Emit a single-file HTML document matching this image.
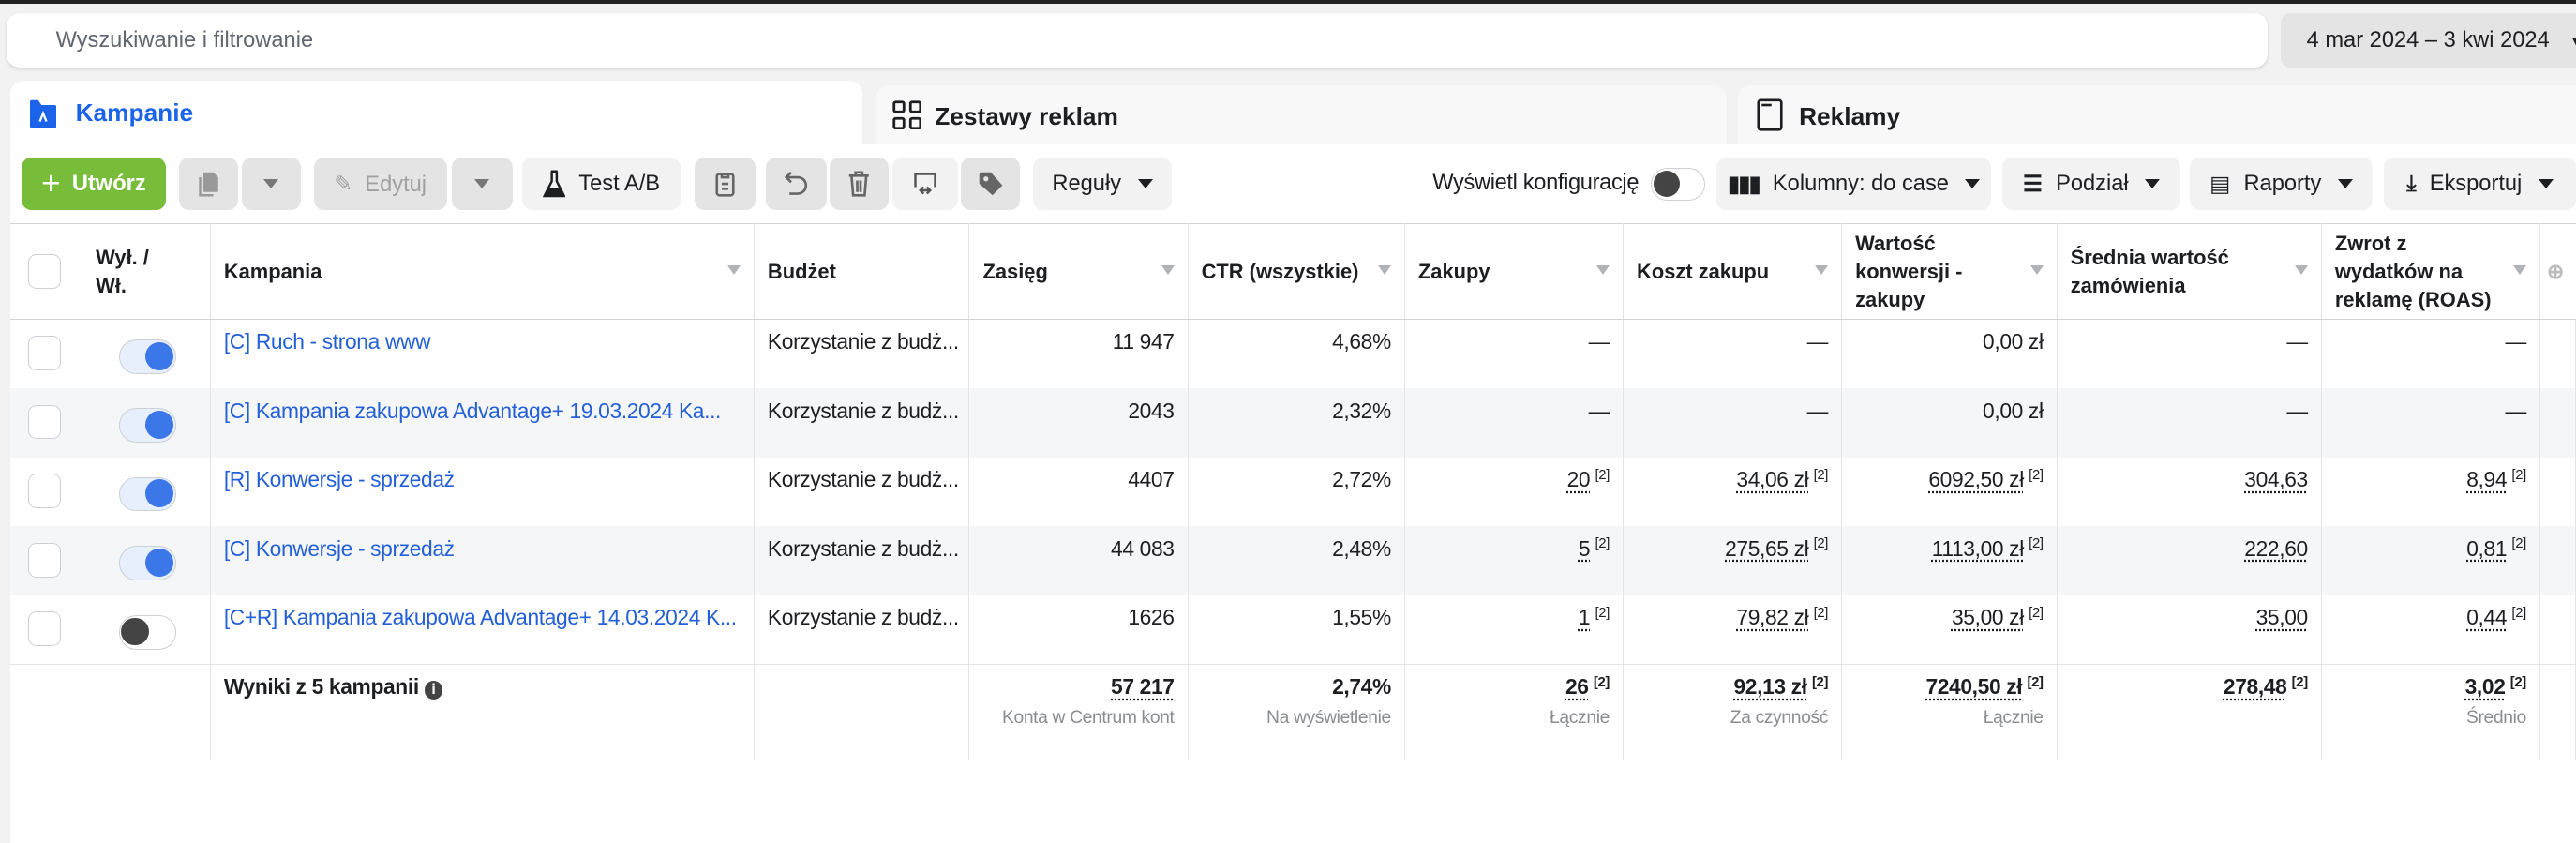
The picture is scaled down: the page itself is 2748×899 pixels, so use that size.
<!DOCTYPE html>
<html><head><meta charset="utf-8"><style>
html{zoom:1.7526}
*{box-sizing:border-box}
body{margin:0;width:1568px;height:513px;overflow:hidden;background:#f2f2f2;font-family:"Liberation Sans",sans-serif;color:#1c1e21;font-size:13px;position:relative}
.abs{position:absolute}
.topbar{left:0;top:0;width:1568px;height:2px;background:#222}
.search{left:4px;top:8px;width:1376px;height:33px;background:#fff;border-radius:8px;box-shadow:0 1px 2px rgba(0,0,0,.12)}
.search span{position:absolute;left:30px;top:9px;color:#606770;font-size:13.5px}
.date{left:1388px;top:8px;width:190px;height:33px;background:#e4e4e4;border-radius:6px;font-size:13.5px;padding:9px 0 0 16px;white-space:nowrap}
.tab{top:52px;height:40px;background:#f8f8f8;border-radius:8px 8px 0 0;font-weight:bold;font-size:15px}
.tab.act{top:49px;background:#fff;color:#1b63e8;height:44px}
.content{left:6px;top:88px;width:1562px;height:425px;background:#fff}
.btn{top:96px;height:32px;background:#e4e4e4;border-radius:6px;font-size:13.5px;display:flex;align-items:center;justify-content:center;color:#1c1e21;white-space:nowrap}
.btn.l{background:#f2f2f2}
.btn.dis{color:#a0a0a0}
.caret{display:inline-block;width:0;height:0;border-left:5px solid transparent;border-right:5px solid transparent;border-top:6px solid #1c1e21;margin-left:10px}
table{position:absolute;left:6px;top:136px;width:1562px;border-collapse:collapse;table-layout:fixed;font-size:12.5px}
td,th{border-right:1px solid #e4e4e4;vertical-align:top;padding:0 8px;overflow:hidden;white-space:nowrap}
th{height:58px;border-top:1px solid #d2d2d2;border-bottom:1px solid #d2d2d2;text-align:left;vertical-align:middle;font-weight:bold;line-height:17px;white-space:normal;position:relative;padding-right:22px}
th .s{position:absolute;right:8px;top:25px;border-left:4px solid transparent;border-right:4px solid transparent;border-top:6px solid #b0b3b8}
td{height:42px;padding-top:6px;font-size:13px;letter-spacing:-0.2px}
tr.g td{background:#f5f6f7}
td.r{text-align:right}
td.link{color:#2360d8}
.cb{width:20px;height:21px;border:1px solid #ccd0d5;border-radius:5px;background:#fff;margin:4px 0 0 3px}
.tg{width:35px;height:21px;border:1px solid #ccd0d5;border-radius:11px;background:#e8effc;position:relative;margin:6px 0 0 14px}
.tg i{position:absolute;right:1px;top:1px;width:17px;height:17px;border-radius:50%;background:#3b77e8}
.tg.off{background:#fff}.tg.off i{left:1px;right:auto;background:#444}
u{text-decoration:underline dotted;text-underline-offset:3px}
sup{font-size:8.5px;margin-left:3px}
tr.f td{height:58px;padding-top:6px;font-weight:bold}
tr.f small{display:block;font-weight:normal;color:#8a8d91;font-size:11px;margin-top:5px}
</style></head><body>
<div class="abs topbar"></div>
<div class="abs search"><span>Wyszukiwanie i filtrowanie</span></div>
<div class="abs date">4 mar 2024 – 3 kwi 2024 <span style="font-size:10px;margin-left:8px">▼</span></div>
<div class="abs tab" style="left:533px;width:518px;"><svg style="position:absolute;left:10px;top:9px" width="18" height="18" viewBox="0 0 18 18" fill="none" stroke="#1c1e21" stroke-width="1.6"><rect x="1" y="1" width="6" height="6" rx="1"/><rect x="11" y="1" width="6" height="6" rx="1"/><rect x="1" y="11" width="6" height="6" rx="1"/><rect x="11" y="11" width="6" height="6" rx="1"/></svg><span style="position:absolute;left:36px;top:10px">Zestawy reklam</span></div>
<div class="abs tab" style="left:1058px;width:520px;"><svg style="position:absolute;left:11px;top:8px" width="16" height="20" viewBox="0 0 16 20" fill="none" stroke="#1c1e21" stroke-width="1.5"><rect x="1" y="1" width="14" height="18" rx="1.5"/><path d="M3 4h6"/></svg><span style="position:absolute;left:37px;top:10px">Reklamy</span></div>
<div class="abs content"></div>
<div class="abs tab act" style="left:6px;width:519px;"><svg style="position:absolute;left:12px;top:11px" width="16" height="18" viewBox="0 0 16 18"><path d="M0 2a1 1 0 0 1 1-1h4l2 3h8a1 1 0 0 1 1 1v12a1 1 0 0 1-1 1H1a1 1 0 0 1-1-1z" fill="#1b63e8"/><path d="M6 14l2-5 2 5" stroke="#fff" stroke-width="1.3" fill="none"/></svg><span style="position:absolute;left:40px;top:11px">Kampanie</span></div>

<div class="abs btn" style="left:13px;width:88px;background:#78bd3a;color:#fff;font-weight:bold"><span style="font-size:20px;font-weight:normal;margin-right:7px">+</span>Utwórz</div>
<div class="abs btn dis" style="left:109px;width:36px;"><svg width="14" height="16" viewBox="0 0 14 16"><path d="M4 1h6l3 3v9H4z" fill="#999"/><path d="M2 4v11h8" stroke="#999" fill="none" stroke-width="1.4"/></svg></div>
<div class="abs btn" style="left:147px;width:36px;"><span class="caret" style="margin:0;border-top-color:#777"></span></div>
<div class="abs btn dis" style="left:191px;width:81px;">✎&nbsp;&nbsp;Edytuj</div>
<div class="abs btn" style="left:275px;width:37px;"><span class="caret" style="margin:0;border-top-color:#777"></span></div>
<div class="abs btn l" style="left:318px;width:96px;"><svg width="14" height="18" viewBox="0 0 14 18" style="margin-right:8px"><path d="M5 1h4M5.5 1v6L1 16h12L8.5 7V1" stroke="#1c1e21" fill="none" stroke-width="1.4"/><path d="M3 11h8l2 5H1z" fill="#1c1e21"/></svg>Test A/B</div>
<div class="abs btn" style="left:423px;width:37px;"><svg width="12" height="16" viewBox="0 0 12 16" fill="none" stroke="#666" stroke-width="1.5"><rect x="1" y="2" width="10" height="13" rx="1.5"/><path d="M4 2h4v2H4z M4 8h4M4 11h4"/></svg></div>
<div class="abs btn" style="left:466px;width:37px;"><svg width="14" height="16" viewBox="0 0 14 16" fill="none" stroke="#666" stroke-width="1.5"><path d="M4 1L1 4l3 3M1 4h7a5 5 0 0 1 0 10H3"/></svg></div>
<div class="abs btn" style="left:505px;width:36px;"><svg width="14" height="16" viewBox="0 0 14 16" fill="none" stroke="#666" stroke-width="1.5"><path d="M1 3h12M5 3V1h4v2M2.5 3l1 12h7l1-12M6 6v7M8 6v7"/></svg></div>
<div class="abs btn l" style="left:543px;width:40px;"><svg width="16" height="16" viewBox="0 0 16 16" fill="none" stroke="#555" stroke-width="1.4"><path d="M2 10V2h12v8M5 12h6M7 10l-2 2 2 2M9 10l2 2-2 2"/></svg></div>
<div class="abs btn" style="left:585px;width:36px;"><svg width="16" height="16" viewBox="0 0 16 16"><path d="M1 2v6l8 7 6-6-7-8H2z" fill="#666"/><circle cx="5" cy="5" r="1.5" fill="#e4e4e4"/></svg></div>
<div class="abs btn l" style="left:629px;width:84px;">Reguły<span class="caret"></span></div>
<div class="abs" style="left:872px;top:104px;font-size:13.5px;letter-spacing:-0.2px">Wyświetl konfigurację</div>
<div class="abs" style="left:1005px;top:102px;width:33px;height:20px;border:1px solid #ccd0d5;border-radius:10px;background:#fff"><div style="position:absolute;left:1px;top:1px;width:16px;height:16px;border-radius:50%;background:#444"></div></div>
<div class="abs btn l" style="left:1045px;width:167px;"><span style="font-weight:900;letter-spacing:-1px;margin-right:8px">▮▮▮</span>Kolumny: do case<span class="caret"></span></div>
<div class="abs btn l" style="left:1219px;width:108px;"><span style="margin-right:8px;font-weight:900">☰</span>Podział<span class="caret"></span></div>
<div class="abs btn l" style="left:1333px;width:111px;"><span style="margin-right:8px">▤</span>Raporty<span class="caret"></span></div>
<div class="abs btn l" style="left:1451px;width:117px;"><span style="margin-right:8px;font-weight:bold">⤓</span>Eksportuj<span class="caret"></span></div>

<table>
<colgroup><col style="width:44px"><col style="width:78px"><col style="width:331px"><col style="width:131px"><col style="width:133px"><col style="width:132px"><col style="width:133px"><col style="width:133px"><col style="width:131px"><col style="width:161px"><col style="width:133px"><col style="width:22px"></colgroup>
<tr><th style="padding:0 8px"><div class="cb" style="margin:0 0 0 3px"></div></th><th>Wył. /<br>Wł.</th><th>Kampania<span class="s"></span></th><th>Budżet</th><th>Zasięg<span class="s"></span></th><th>CTR (wszystkie)<span class="s"></span></th><th>Zakupy<span class="s"></span></th><th>Koszt zakupu<span class="s"></span></th><th>Wartość konwersji - zakupy<span class="s"></span></th><th>Średnia wartość zamówienia<span class="s"></span></th><th>Zwrot z wydatków na reklamę (ROAS)<span class="s"></span></th><th style="border-right:none;color:#bbb;padding:0 0 0 4px">⊕</th></tr>
<tr><td><div class="cb"></div></td><td><div class="tg"><i></i></div></td><td class="link">[C] Ruch - strona www</td><td>Korzystanie z budż...</td><td class="r">11 947</td><td class="r">4,68%</td><td class="r">—</td><td class="r">—</td><td class="r">0,00 zł</td><td class="r">—</td><td class="r">—</td><td></td></tr>
<tr class="g"><td><div class="cb"></div></td><td><div class="tg"><i></i></div></td><td class="link">[C] Kampania zakupowa Advantage+ 19.03.2024 Ka...</td><td>Korzystanie z budż...</td><td class="r">2043</td><td class="r">2,32%</td><td class="r">—</td><td class="r">—</td><td class="r">0,00 zł</td><td class="r">—</td><td class="r">—</td><td></td></tr>
<tr><td><div class="cb"></div></td><td><div class="tg"><i></i></div></td><td class="link">[R] Konwersje - sprzedaż</td><td>Korzystanie z budż...</td><td class="r">4407</td><td class="r">2,72%</td><td class="r"><u>20</u><sup>[2]</sup></td><td class="r"><u>34,06 zł</u><sup>[2]</sup></td><td class="r"><u>6092,50 zł</u><sup>[2]</sup></td><td class="r"><u>304,63</u></td><td class="r"><u>8,94</u><sup>[2]</sup></td><td></td></tr>
<tr class="g"><td><div class="cb"></div></td><td><div class="tg"><i></i></div></td><td class="link">[C] Konwersje - sprzedaż</td><td>Korzystanie z budż...</td><td class="r">44 083</td><td class="r">2,48%</td><td class="r"><u>5</u><sup>[2]</sup></td><td class="r"><u>275,65 zł</u><sup>[2]</sup></td><td class="r"><u>1113,00 zł</u><sup>[2]</sup></td><td class="r"><u>222,60</u></td><td class="r"><u>0,81</u><sup>[2]</sup></td><td></td></tr>
<tr style="border-bottom:1px solid #e4e4e4"><td><div class="cb"></div></td><td><div class="tg off"><i></i></div></td><td class="link">[C+R] Kampania zakupowa Advantage+ 14.03.2024 K...</td><td>Korzystanie z budż...</td><td class="r">1626</td><td class="r">1,55%</td><td class="r"><u>1</u><sup>[2]</sup></td><td class="r"><u>79,82 zł</u><sup>[2]</sup></td><td class="r"><u>35,00 zł</u><sup>[2]</sup></td><td class="r"><u>35,00</u></td><td class="r"><u>0,44</u><sup>[2]</sup></td><td></td></tr>
<tr class="f"><td style="border-right:none"></td><td></td><td>Wyniki z 5 kampanii <span style="display:inline-block;width:11px;height:11px;border-radius:50%;background:#444;color:#fff;font-size:9px;text-align:center;line-height:11px">i</span></td><td></td><td class="r"><u>57 217</u><small>Konta w Centrum kont</small></td><td class="r">2,74%<small>Na wyświetlenie</small></td><td class="r"><u>26</u><sup>[2]</sup><small>Łącznie</small></td><td class="r"><u>92,13 zł</u><sup>[2]</sup><small>Za czynność</small></td><td class="r"><u>7240,50 zł</u><sup>[2]</sup><small>Łącznie</small></td><td class="r"><u>278,48</u><sup>[2]</sup><small>&nbsp;</small></td><td class="r"><u>3,02</u><sup>[2]</sup><small>Średnio</small></td><td></td></tr>
</table>
</body></html>
